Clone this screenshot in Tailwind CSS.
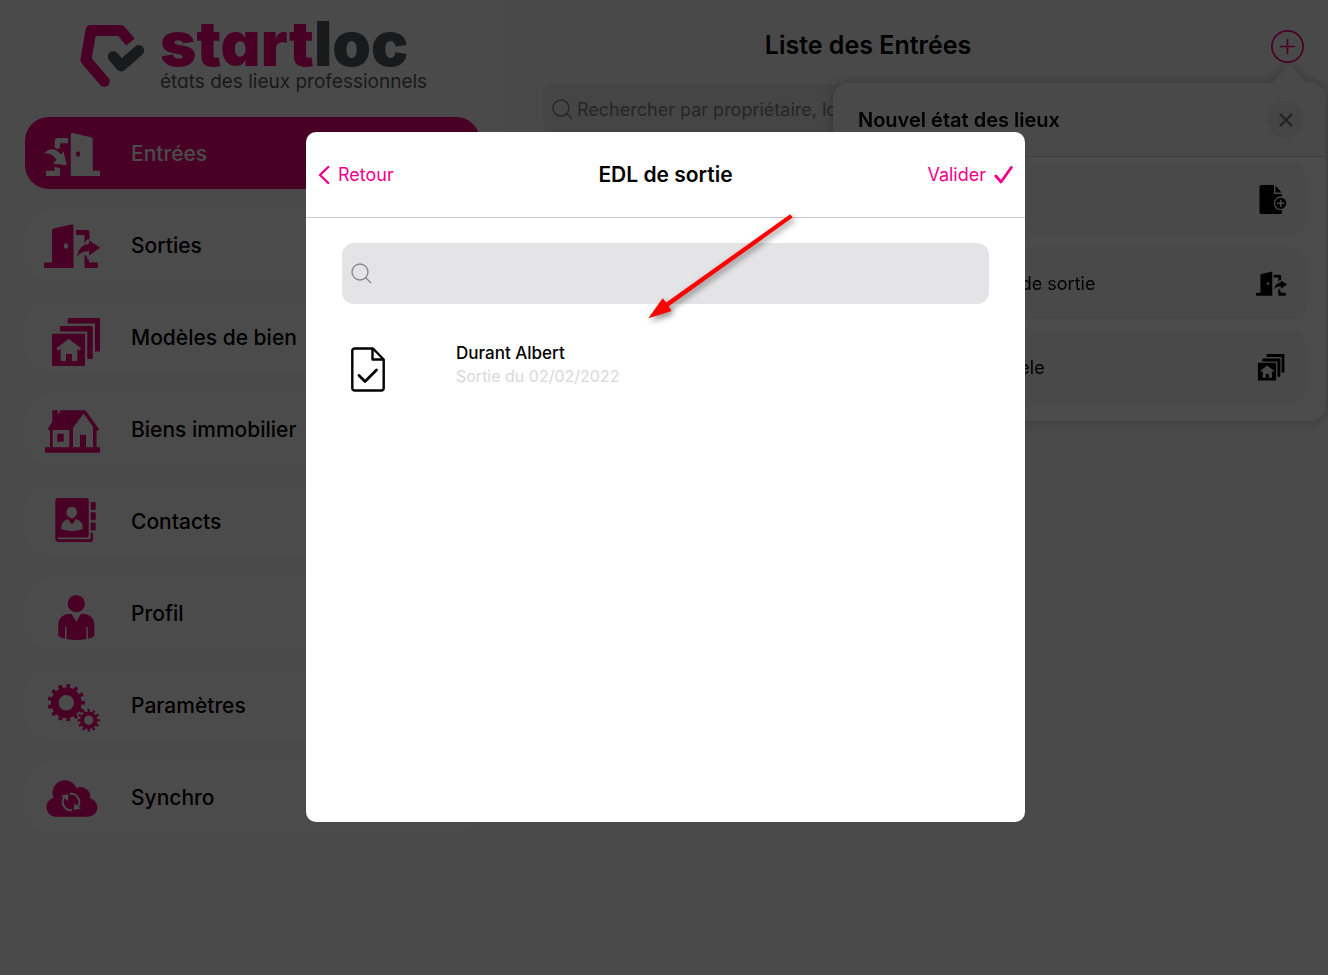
<!DOCTYPE html>
<html lang="fr">
<head>
    <meta charset="UTF-8">
    <meta name="viewport" content="width=device-width, initial-scale=1.0">
    <title>Startloc - Liste des Entrées</title>
    <script src="https://cdn.jsdelivr.net/npm/@tailwindcss/browser@4"></script>
</head>
<body class="bg-[#f7f7f7] min-h-screen overflow-hidden font-['Inter',sans-serif] text-black">

<!-- Shared icons -->
<svg class="hidden">
    <symbol id="icon-sortie" viewBox="0 0 58 72">
        <path fill-rule="evenodd" d="M8 21.5Q8 20 9.500 19.600L27.500 15.400Q29.500 15 29.500 17V59H0V54.500Q0 53.500 1 53.500H8ZM22 34.200a2 2.800 0 1 0 0 5.600a2 2.800 0 1 0 0-5.600Z"/>
        <path d="M32 21H43Q45.500 21 45.500 23.500V30Q41 30.500 41 35L40.500 34V26H32Z"/>
        <path d="M33.300 47.700Q34 36 45 35V31.500L56.300 38.700L45 46.500V42Q37 42 33.300 47.700Z"/>
        <path d="M40.500 46Q43 46 43.500 50L45 51V53.500H53Q54 53.500 54 54.500V58Q54 59 53 59H40.500Z"/>
    </symbol>
    <symbol id="icon-modele" viewBox="0 0 58 72">
        <path d="M23.700 18Q23.700 17 24.700 17H55Q56 17 56 18V49.500Q56 50.500 55 50.500H51V22.500H23.700Z"/>
        <path d="M16 26Q16 25 17 25H47.700Q48.700 25 48.700 26V57Q48.700 58 47.700 58H43.300V30.500H16Z"/>
        <path fill-rule="evenodd" d="M8 33.500Q8 32.700 9 32.700H40Q41 32.700 41 33.500V65H8ZM24.700 38L12.300 47.300L14 49.500L16.700 48V60H22V53H28V60H33.300V48L35.700 49.500L37.300 47.300Z"/>
    </symbol>
</svg>

<div class="flex min-h-screen">
    <!-- Menu -->
    <aside class="w-[505px] shrink-0 bg-[#f8f8f8] pl-[25px] pr-[25px] shadow-[0_0_8px_rgba(0,0,0,0.15)]">
        <div class="flex h-[117px] pt-[22px] pl-[53px]">
            <svg class="w-[70px] h-[70px] shrink-0" viewBox="0 0 70 70" fill="none" stroke-width="11" stroke-linejoin="round">
                <path d="M52.500 20L42.700 8.500H13L7.900 38L26 59" stroke="#f0007b"/>
                <circle cx="26.300" cy="59.300" r="5.500" fill="#f0007b"/>
                <path d="M35.300 34.700L43.300 43.900L60.700 28.500" stroke="#56585c" stroke-linecap="round"/>
            </svg>
            <div class="pl-[12px] whitespace-nowrap [font-feature-settings:'cv11']">
                <div class="text-[62px] leading-[44px] font-black text-[#f0007b]">start<span class="text-[#56585c]">loc</span></div>
                <div class="text-[19px] leading-[32px] text-[#56585c]">états des lieux professionnels</div>
            </div>
        </div>

        <nav class="flex flex-col gap-5 text-[21px] font-medium">
            <a href="#" class="flex items-center h-[72px] pl-[19px] rounded-3xl bg-[#f0007b] text-[#fcfcfc]">
                <svg class="w-[58px] h-[72px]" viewBox="0 0 58 72" fill="currentColor">
                    <path fill-rule="evenodd" d="M26.700 18Q26.700 15.500 29 16L47 20.200Q48.700 20.600 48.700 22V53.700H55Q56 53.700 56 54.700V59H26.700ZM34 34.200a2 2.800 0 1 0 0 5.600a2 2.800 0 1 0 0-5.600Z"/>
                    <path d="M24 21V26.300H16V31L13 32L10.700 30.500V24Q10.700 21 13.700 21Z"/>
                    <path d="M0 36.300Q9 27.500 17 37.500L19.500 34.500L22.700 48.300L8.700 46.500L12.500 43Q8.500 35.500 0 36.300Z"/>
                    <path d="M10.700 50L16 51V59H3Q2 59 2 58V54.700Q2 53.700 3 53.700H10.700Z"/>
                </svg>
                <span class="ml-[29px] pt-0.5">Entrées</span>
            </a>
            <a href="#" class="flex items-center h-[72px] pl-[19px] rounded-3xl bg-[#fbfbfb]">
                <svg class="w-[58px] h-[72px] fill-[#f0007b]"><use href="#icon-sortie"/></svg>
                <span class="ml-[29px] pt-0.5">Sorties</span>
            </a>
            <a href="#" class="flex items-center h-[72px] pl-[19px] rounded-3xl bg-[#fbfbfb]">
                <svg class="w-[58px] h-[72px] fill-[#f0007b]"><use href="#icon-modele"/></svg>
                <span class="ml-[29px] pt-0.5">Modèles de bien</span>
            </a>
            <a href="#" class="flex items-center h-[72px] pl-[19px] rounded-3xl bg-[#fbfbfb]">
                <svg class="w-[58px] h-[72px] fill-[#f0007b]" viewBox="0 0 58 72">
                    <path fill-rule="evenodd" d="M8.300 17.300H13.700V22L16.700 17.300H41.300L55.300 36.500L52.500 38V54.300H56V59.700H1V54.300H6V37.500L3.500 36.500L8.300 28.700ZM8.700 37V54.300H25.300V37ZM29 34.700V54.300H36V41.700H42V54.300H49V33.700L39.700 20.500Z"/>
                    <path d="M13.300 40.700H19.700V48.700H13.300Z"/>
                </svg>
                <span class="ml-[29px] pt-0.5">Biens immobilier</span>
            </a>
            <a href="#" class="flex items-center h-[72px] pl-[19px] rounded-3xl bg-[#fbfbfb]">
                <svg class="w-[58px] h-[72px] fill-[#f0007b]" viewBox="0 0 58 72">
                    <path fill-rule="evenodd" d="M13.500 13H42.500Q44.700 13 44.700 15.200V50Q44.700 52.500 42.500 52.500H14V54.200H45.500Q46.700 54.200 46.700 53V47.700H49V54Q49 57 46 57H14.300Q11.300 57 11.300 54V15.200Q11.300 13 13.500 13ZM27.700 21.800a5.200 5.600 0 0 0-3 10.200q1.500 1.300 3 1.300t3-1.300a5.200 5.600 0 0 0-3-10.200ZM24 34Q17 36 17 44Q27.500 48 39 44Q39 36 32 34L28 39.500Z"/>
                    <rect x="46.700" y="17" width="5" height="8" rx="1"/>
                    <rect x="46.700" y="27.300" width="5" height="8" rx="1"/>
                    <rect x="46.700" y="37.500" width="5" height="8" rx="1"/>
                </svg>
                <span class="ml-[29px] pt-0.5">Contacts</span>
            </a>
            <a href="#" class="flex items-center h-[72px] pl-[19px] rounded-3xl bg-[#fbfbfb]">
                <svg class="w-[58px] h-[72px] fill-[#f0007b]" viewBox="0 0 58 72">
                    <circle cx="32.300" cy="26.700" r="8.600"/>
                    <path d="M27.500 36.700L32.300 44.700L37 36.700Q50.300 37 50.300 48V59Q48 61 43.800 61.700V50H42.300V62Q32 64 22.500 62V50H21V61.700Q17 61 14.300 59V48Q14.300 37 27.500 36.700Z"/>
                </svg>
                <span class="ml-[29px] pt-0.5">Profil</span>
            </a>
            <a href="#" class="flex items-center h-[72px] pl-[19px] rounded-3xl bg-[#fbfbfb]">
                <svg class="w-[58px] h-[72px]" viewBox="0 0 58 72" fill="none" stroke="#f0007b">
                    <circle cx="22.300" cy="33.700" r="11.500" stroke-width="7.600"/>
                    <circle cx="22.300" cy="33.700" r="16.600" stroke-width="4" pathLength="26" stroke-dasharray="0.900 1.100" stroke-dashoffset="0.450"/>
                    <circle cx="44.700" cy="51.300" r="6.700" stroke-width="4"/>
                    <circle cx="44.700" cy="51.300" r="9.700" stroke-width="3" pathLength="24" stroke-dasharray="0.900 1.100" stroke-dashoffset="0.450"/>
                </svg>
                <span class="ml-[29px] pt-0.5">Paramètres</span>
            </a>
            <a href="#" class="flex items-center h-[72px] pl-[19px] rounded-3xl bg-[#fbfbfb]">
                <svg class="w-[58px] h-[72px]" viewBox="0 0 58 72">
                    <path fill="#f0007b" d="M11.300 55.700A9.700 9.700 0 0 1 9.500 36.700A12 12 0 0 1 32.500 27A9.500 9.500 0 0 1 46 37.300A9.300 9.300 0 0 1 44 55.700Z"/>
                    <g fill="none" stroke="#fbfbfb" stroke-width="2">
                        <path d="M20.500 36A8.200 8.200 0 0 0 28 49.200"/>
                        <path d="M26 32.800A8.200 8.200 0 0 1 33.500 46"/>
                    </g>
                    <path fill="#fbfbfb" d="M17 34.500L24.500 33.300L24 40ZM37 47.500L29.800 49L30.200 42.300Z"/>
                </svg>
                <span class="ml-[29px] pt-0.5">Synchro</span>
            </a>
        </nav>
    </aside>

    <!-- Liste -->
    <main class="relative flex-1 bg-[#f8f8f8]">
        <header class="h-[153px] border-b border-[#e4e4e4] bg-[#f6f6f6]">
            <div class="flex items-center h-[84px] pt-2 pr-6">
                <h1 class="flex-1 text-center text-[25px] font-semibold">Liste des Entrées</h1>
                <button aria-label="Ajouter" class="ml-10 w-[33px] h-[33px]">
                    <svg viewBox="0 0 33 33" fill="none" stroke="#f0007b" stroke-width="1.700" stroke-linecap="round">
                        <circle cx="16.500" cy="16.500" r="15.600"/>
                        <path d="M16.500 9.500v14M9.500 16.500h14"/>
                    </svg>
                </button>
            </div>
            <label class="flex items-center h-[50px] ml-[38px] mr-6 pl-[9px] rounded-xl bg-[#e6e6e8] text-[#808084]">
                <svg class="w-[21px] h-[21px] shrink-0" viewBox="0 0 21 21" fill="none" stroke="currentColor" stroke-width="1.400">
                    <circle cx="9" cy="9" r="8"/>
                    <path d="M14.500 14.500L20 20"/>
                </svg>
                <input type="text" aria-label="Rechercher" placeholder="Rechercher par propriétaire, locataire" class="flex-1 ml-1 text-[18px] outline-none placeholder:text-[#808084]">
            </label>
        </header>

        <!-- Popover -->
        <section class="absolute top-[83px] right-[2px] w-[493px] rounded-2xl bg-[#fbfbfb] drop-shadow-[0_0_6px_rgba(0,0,0,0.25)]">
            <svg class="absolute -top-[19px] right-[19px] w-[36px] h-[20px] fill-[#f6f6f6]" viewBox="0 0 36 20">
                <path d="M0 20L16 2Q18 0 20 2L36 20Z"/>
            </svg>
            <div class="flex items-center justify-between h-[74px] pl-[25px] pr-[22px] rounded-t-2xl border-b border-[#d4d4d4] bg-[#f6f6f6]">
                <h2 class="text-[20px] font-semibold">Nouvel état des lieux</h2>
                <button aria-label="Fermer" class="flex items-center justify-center w-[37px] h-[37px] rounded-full bg-[#e6e6e6]">
                    <svg class="w-[14px] h-[14px]" viewBox="0 0 14 14" fill="none" stroke="#77777b" stroke-width="2.200" stroke-linecap="round">
                        <path d="M1.500 1.500l11 11M12.500 1.500l-11 11"/>
                    </svg>
                </button>
            </div>
            <div class="flex flex-col gap-3 px-[19px] pt-[6px] pb-[18px] text-[18px]">
                <button class="flex items-center justify-between h-[72px] px-[19px] rounded-2xl bg-[#f5f5f5]">
                    <span>Nouveau</span>
                    <svg class="w-[32px] h-[40px]" viewBox="0 -1 32 40">
                        <path d="M5 5Q3.500 5 3.500 6.500V32.500Q3.500 34 5 34H24.500Q26 34 26 32.500V14H18V5Z"/>
                        <path d="M19.500 5.500V12.500H25.500Z"/>
                        <circle cx="24.700" cy="23.300" r="6.300" stroke="#f5f5f5" stroke-width="1.300"/>
                        <path d="M24.700 19.700v7.200M21.100 23.300h7.200" stroke="#f5f5f5" stroke-width="1.500"/>
                    </svg>
                </button>
                <button class="flex items-center justify-between h-[72px] px-[19px] rounded-2xl bg-[#f5f5f5]">
                    <span>A partir d'un EDL de sortie</span>
                    <svg class="w-[32px] h-[40px]"><use href="#icon-sortie"/></svg>
                </button>
                <button class="flex items-center justify-between h-[72px] px-[19px] rounded-2xl bg-[#f5f5f5]">
                    <span>A partir d'un modele</span>
                    <svg class="w-[32px] h-[40px]" viewBox="0 0 32 40"><use href="#icon-modele" x="-2.500" y="-2.500" width="32" height="40"/></svg>
                </button>
            </div>
        </section>
    </main>
</div>

<!-- Modale -->
<div class="fixed inset-0 flex justify-center items-start pt-[132px] pl-[3px] bg-black/70">
    <div role="dialog" aria-labelledby="modal-title" class="relative w-[719px] h-[690px] rounded-[10px] bg-white">
        <div class="grid grid-cols-3 items-center h-[86px] px-3 border-b border-[#c9c9cb] text-[18px]">
            <button class="flex items-center gap-2 justify-self-start text-[#f0008a]">
                <svg class="w-3 h-5" viewBox="0 0 12 20" fill="none" stroke="currentColor" stroke-width="2.400" stroke-linecap="round" stroke-linejoin="round">
                    <path d="M10.300 2L2 10L10.300 18"/>
                </svg>
                Retour
            </button>
            <h2 id="modal-title" class="text-center text-[21px] font-semibold">EDL de sortie</h2>
            <button class="flex items-center gap-2 justify-self-end text-[#f0008a]">
                Valider
                <svg class="w-[19px] h-5" viewBox="0 0 19 20" fill="none" stroke="currentColor" stroke-width="2.800" stroke-linecap="round" stroke-linejoin="round">
                    <path d="M1.800 11L7 17L17.300 2.500"/>
                </svg>
            </button>
        </div>
        <div class="px-9 pt-[25px]">
            <label class="flex items-center h-[61px] pl-[9px] rounded-xl bg-[#e4e4e6] text-[#858587]">
                <svg class="w-[21px] h-[21px]" viewBox="0 0 21 21" fill="none" stroke="currentColor" stroke-width="1.300">
                    <circle cx="9" cy="9" r="8"/>
                    <path d="M14.500 14.500L20 20"/>
                </svg>
                <input type="text" aria-label="Rechercher" class="flex-1 ml-2 h-full text-[18px] text-black outline-none">
            </label>
            <a href="#" class="flex mt-[38px] pl-[9px]">
                <svg class="w-[34px] h-[45px] mt-[5px]" viewBox="0 0 34 45" fill="none" stroke="black" stroke-width="2.400" stroke-linejoin="round">
                    <path d="M4 1.500H22L32.700 12.500V41Q32.700 43.500 30.200 43.500H4Q1.300 43.500 1.300 41V4Q1.300 1.500 4 1.500Z"/>
                    <path d="M21.500 2V12.500H32"/>
                    <path d="M8 28.500L14 34.500L25.500 23" stroke-width="2.800" stroke-linecap="round"/>
                </svg>
                <span class="ml-[71px] text-[16px] leading-[23px]">
                    <span class="block text-[17px] font-medium">Durant Albert</span>
                    <span class="block text-[#d8d8d8]">Sortie du 02/02/2022</span>
                </span>
            </a>
        </div>
        <svg class="absolute left-[334px] top-[73px] w-[160px] h-[125px] pointer-events-none drop-shadow-[2px_3px_3px_rgba(0,0,0,0.45)]" viewBox="0 0 160 125">
            <path fill="#ff0000" d="M150.200 9.300L152.700 12.600L28.700 101.200L31.500 106L8.300 113.300L22.700 93.300L26.200 97.600Z"/>
        </svg>
    </div>
</div>
</body>
</html>
